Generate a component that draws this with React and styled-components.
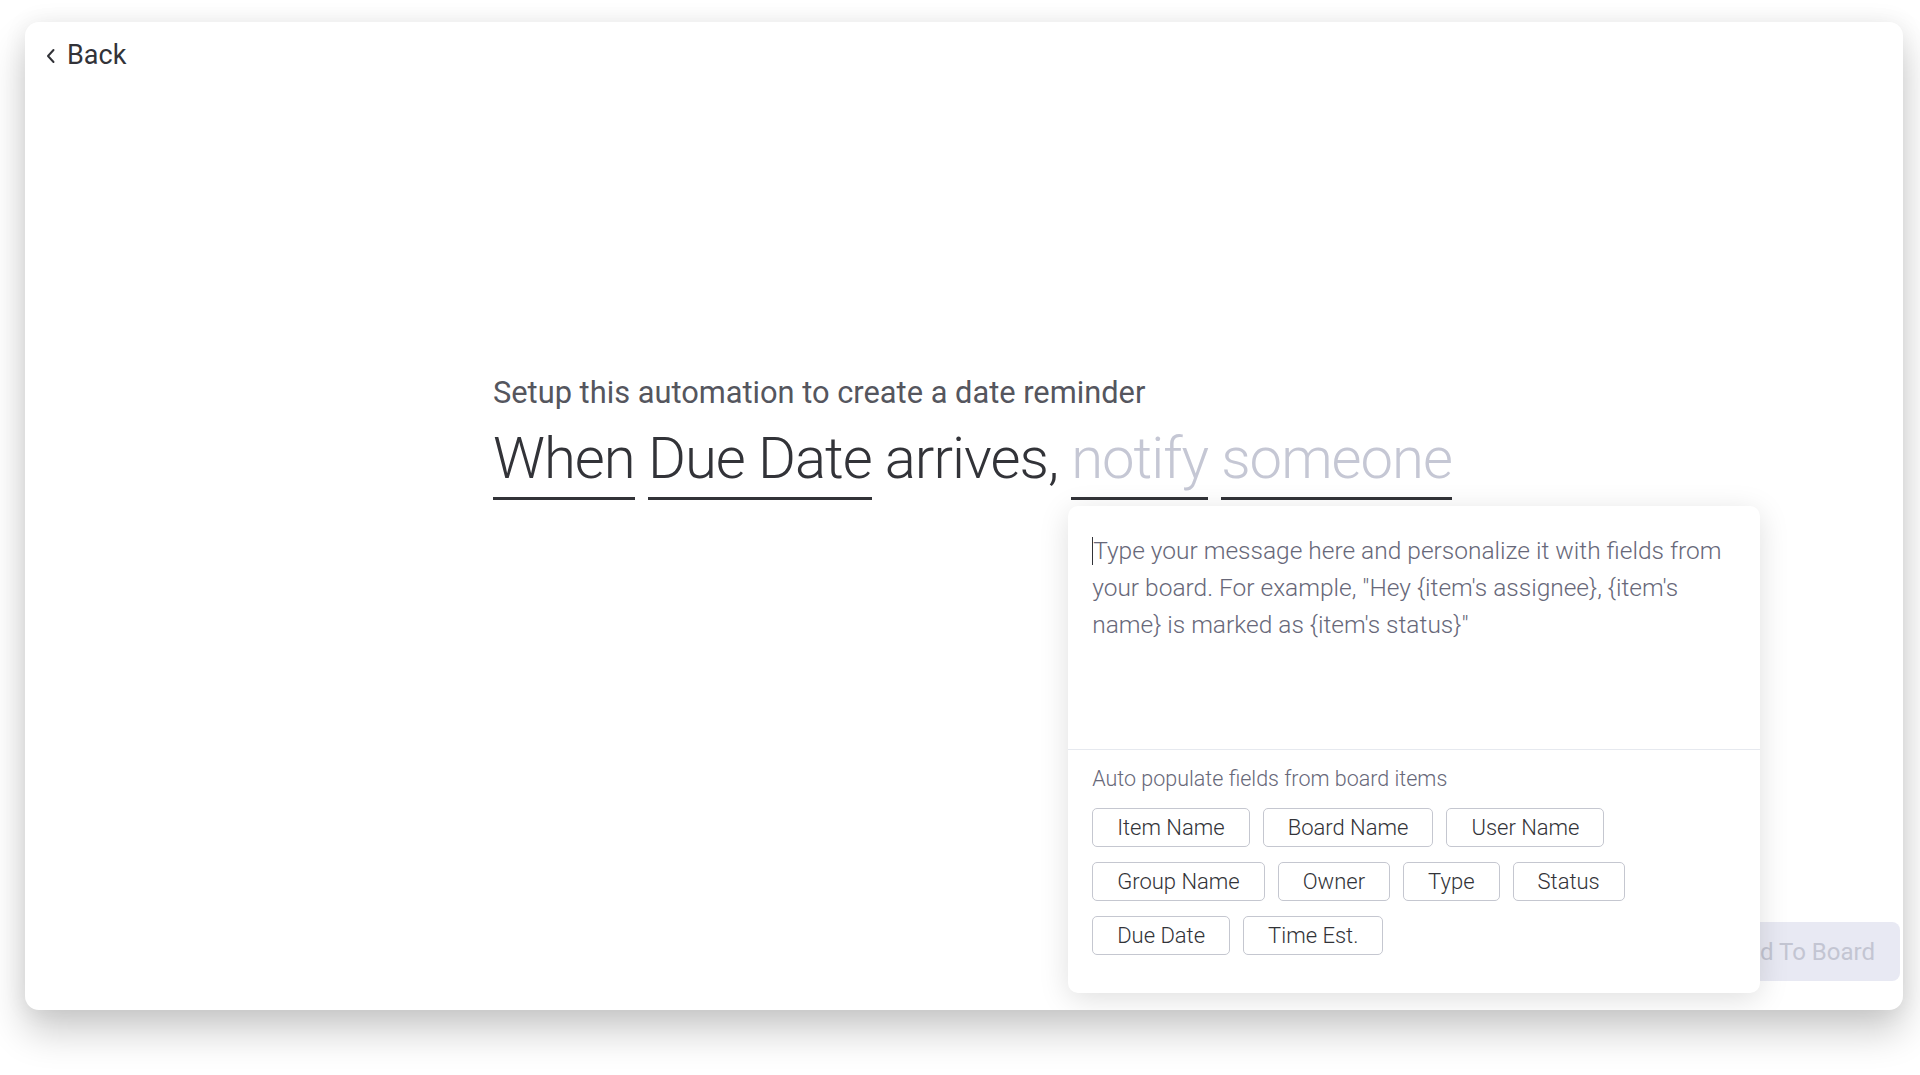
import React from 'react';
import styled, { createGlobalStyle } from 'styled-components';

const GlobalStyle = createGlobalStyle`
	html, body {
		margin: 0;
		padding: 0;
		background: #ffffff;
		font-family: Roboto, 'Liberation Sans', sans-serif;
	}
	* {
		box-sizing: border-box;
	}
`;

const fields = [
	['Item Name', 'Board Name', 'User Name'],
	['Group Name', 'Owner', 'Type', 'Status'],
	['Due Date', 'Time Est.'],
];

const ChevronLeft = () => (
	<svg width='12' height='16' viewBox='0 0 12 16' fill='none'>
		<path
			d='M8.5 2 L3 8 L8.5 14'
			stroke='#323338'
			strokeWidth='2'
			strokeLinecap='round'
			strokeLinejoin='round'
		/>
	</svg>
);

export default function App() {
	return (
		<>
			<GlobalStyle />
			<Page>
				<Card>
					<Header>
						<BackButton>
							<ChevronLeft />
							<span>Back</span>
						</BackButton>
					</Header>
					<Content>
						<Subtitle>Setup this automation to create a date reminder</Subtitle>
						<Sentence>
							<Token>When</Token> <Token>Due Date</Token> arrives,{' '}
							<Anchor>
								<Token $muted>notify</Token>
								<Popup>
									<MessageArea>
										<Caret />
										Type your message here and personalize it with fields from
										your board. For example, "Hey {'{'}item's assignee{'}'},{' '}
										{'{'}item's name{'}'} is marked as {'{'}item's status{'}'}"
									</MessageArea>
									<FieldSection>
										<FieldLabel>Auto populate fields from board items</FieldLabel>
										<ChipRows>
											{fields.map((row, i) => (
												<ChipRow key={i}>
													{row.map((f) => (
														<Chip key={f}>{f}</Chip>
													))}
												</ChipRow>
											))}
										</ChipRows>
									</FieldSection>
								</Popup>
							</Anchor>{' '}
							<Token $muted>someone</Token>
						</Sentence>
					</Content>
					<Footer>
						<AddButton>Add To Board</AddButton>
					</Footer>
				</Card>
			</Page>
		</>
	);
}

const Page = styled.div`
	padding: 22px 17px 65px 25px;
`;

const Card = styled.div`
	display: flex;
	flex-direction: column;
	height: 988px;
	background: #ffffff;
	border-radius: 14px;
	overflow: hidden;
	box-shadow: 0 22px 38px rgba(0, 0, 0, 0.2), 0 0 24px rgba(0, 0, 0, 0.07);
`;

const Header = styled.div`
	display: flex;
	padding: 17px 20px;
`;

const BackButton = styled.div`
	display: flex;
	align-items: center;
	gap: 10px;
	font-size: 27px;
	color: #323338;
	cursor: pointer;
	svg {
		margin-top: 2px;
	}
`;

const Content = styled.div`
	padding: 286px 0 0 468px;
`;

const Subtitle = styled.div`
	font-size: 30.8px;
	color: #55565e;
`;

const Sentence = styled.div`
	margin-top: 13px;
	font-size: 58px;
	font-weight: 300;
	letter-spacing: -1px;
	color: #323338;
	white-space: nowrap;
`;

const Token = styled.span`
	display: inline-block;
	padding-bottom: 7px;
	border-bottom: 3px solid #323338;
	line-height: 64px;
	color: ${(p) => (p.$muted ? '#c5c7d4' : '#323338')};
`;

const Anchor = styled.span`
	position: relative;
	display: inline-block;
`;

const Popup = styled.div`
	position: absolute;
	top: calc(100% + 6px);
	left: -3px;
	z-index: 2;
	width: 692px;
	background: #ffffff;
	border-radius: 10px;
	box-shadow: 0 6px 30px rgba(0, 0, 0, 0.13);
	white-space: normal;
	letter-spacing: normal;
`;

const MessageArea = styled.div`
	height: 244px;
	padding: 26px 24px 0;
	font-size: 24.5px;
	font-weight: 300;
	line-height: 37px;
	color: #676879;
	border-bottom: 1px solid #e6e9ef;
`;

const Caret = styled.span`
	display: inline-block;
	width: 0;
	height: 28px;
	border-left: 1.5px solid #323338;
	vertical-align: -6px;
`;

const FieldSection = styled.div`
	padding: 16px 24px 38px;
`;

const FieldLabel = styled.div`
	font-size: 21.5px;
	font-weight: 300;
	line-height: 26px;
	color: #676879;
`;

const ChipRows = styled.div`
	display: flex;
	flex-direction: column;
	gap: 15px;
	margin-top: 16px;
`;

const ChipRow = styled.div`
	display: flex;
	gap: 13px;
`;

const Chip = styled.div`
	display: flex;
	align-items: center;
	height: 39px;
	padding: 0 24px;
	border: 1px solid #c5c7d0;
	border-radius: 5px;
	font-size: 22px;
	font-weight: 300;
	color: #323338;
	cursor: pointer;
`;

const Footer = styled.div`
	display: flex;
	justify-content: flex-end;
	margin-top: auto;
	padding: 0 3px 29px 0;
`;

const AddButton = styled.div`
	display: flex;
	align-items: center;
	height: 59px;
	padding: 0 25px;
	border-radius: 8px;
	background: #e8e9f3;
	color: #c3c5d2;
	font-size: 24px;
`;
